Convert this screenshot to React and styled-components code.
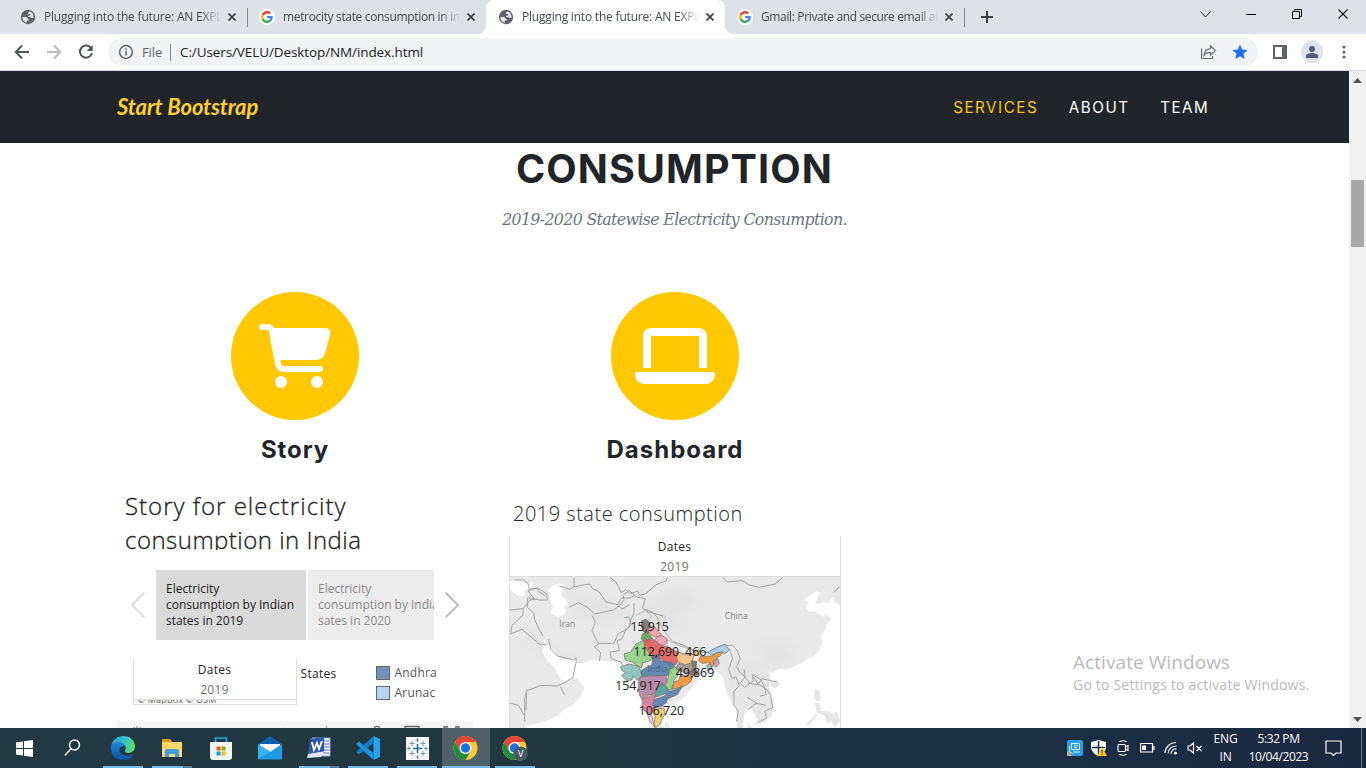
import React from "react";
import styled, { createGlobalStyle, css } from "styled-components";

const ui = `"Open Sans", "Noto Sans", "Liberation Sans", sans-serif`;
const display = `Inter, "Open Sans", sans-serif`;

const Global = createGlobalStyle`
  *{box-sizing:border-box}
  html,body{margin:0;padding:0}
  body{width:1366px;height:768px;overflow:hidden;background:#fff;font-family:${ui}}
  svg{display:block;flex:none}
`;

const Screen = styled.div`
  display:flex;flex-direction:column;width:1366px;height:768px;overflow:hidden;
`;

/* ---------- browser chrome ---------- */
const TabStrip = styled.div`
  height:34px;flex:none;display:flex;align-items:stretch;background:#dee1e6;padding-left:8px;
`;
const Tab = styled.div`
  width:239px;display:flex;align-items:center;padding:0 9px 0 12px;position:relative;
  ${p => p.$divider && css`&::after{content:"";position:absolute;right:-1px;top:8px;width:1px;height:19px;background:#84878b}`}
  ${p => p.$active && css`
    background:#fff;border-radius:8px 8px 0 0;
    &::before,&::after{content:"";position:absolute;bottom:0;width:8px;height:8px}
    &::before{left:-8px;background:radial-gradient(circle at 0 0,#dee1e6 7.5px,#fff 8px)}
    &::after{right:-8px;background:radial-gradient(circle at 100% 0,#dee1e6 7.5px,#fff 8px)}`}
`;
const TabTitle = styled.div`
  margin-left:8px;width:177px;overflow:hidden;white-space:nowrap;font-size:12px;line-height:18px;
  letter-spacing:${p => p.$track}px;color:#45494d;
  mask-image:linear-gradient(90deg,#000 157px,transparent 177px);
`;
const TabClose = styled.div`margin-left:auto;margin-right:2px;padding-left:2px`;
const NewTab = styled.div`width:46px;display:grid;place-items:center`;
const WindowButtons = styled.div`
  margin-left:auto;display:flex;height:28px;
`;
const WindowButton = styled.div`width:46px;display:grid;place-items:center`;

const Toolbar = styled.div`
  height:37px;flex:none;display:flex;align-items:center;background:#fff;border-bottom:1px solid #dadce0;
  padding:0 10px 0 14px;
`;
const NavIcons = styled.div`display:flex;gap:16px;width:94px`;
const Address = styled.div`
  width:1150px;height:28px;border-radius:14px;background:#f1f3f4;display:flex;align-items:center;
  padding:0 10px 0 10px;font-size:13.5px;color:#202124;
`;
const Scheme = styled.span`
  margin-left:8px;color:#5f6368;padding-right:7px;border-right:1px solid #80868b;line-height:17px;width:29px;
  font-size:13px;letter-spacing:-.1px;
`;
const Url = styled.span`margin-left:9px;letter-spacing:-.1px;white-space:nowrap`;
const AddressActions = styled.div`margin-left:auto;display:flex;gap:15px;align-items:center`;
const ToolbarActions = styled.div`
  display:flex;align-items:center;flex:1;padding-left:15px;
`;
const Avatar = styled.div`
  width:22px;height:22px;border-radius:50%;background:#dee1e6;display:grid;place-items:center;margin:0 19px 0 14px;
`;

/* ---------- web page ---------- */
const Viewport = styled.div`flex:1;min-height:0;display:flex;overflow:hidden`;
const Page = styled.div`width:1349px;overflow:hidden;background:#fff`;
const SiteNav = styled.nav`
  height:72px;background:#212529;display:flex;align-items:center;justify-content:space-between;
  padding:0 140px 0 117px;
`;
const Brand = styled.div`
  font:italic 700 22px/30px Lato,sans-serif;color:#ffcf33;letter-spacing:-.1px;
`;
const Links = styled.div`display:flex;gap:30.500px;padding-top:1px`;
const NavLink = styled.a`
  font:400 15.2px/24px ${display};letter-spacing:${p => p.$track}px;color:${p => (p.$active ? "#ffc800" : "#fff")};
`;
const SectionTitle = styled.h2`
  margin:0;height:52px;text-align:center;font:750 39.500px/52px ${display};letter-spacing:1.1px;color:#212529;
`;
const SectionSub = styled.h3`
  margin:13px 0 0;height:23px;text-align:center;font:italic 400 15.800px/23px "DejaVu Serif","Liberation Serif",serif;
  letter-spacing:-.65px;color:#6c757d;
`;
const Columns = styled.div`
  display:grid;grid-template-columns:repeat(3,380px);margin:61px auto 0;width:1140px;
`;
const Column = styled.section`display:flex;flex-direction:column;align-items:center`;
const Disc = styled.div`
  width:128px;height:128px;border-radius:50%;background:#ffc800;display:grid;place-items:center;
`;
const ColumnTitle = styled.h4`
  margin:15px 0 0;height:30px;font:700 24px/29px ${display};letter-spacing:${p => p.$track}px;text-indent:1px;color:#212529;
`;

/* ---------- story visualisation ---------- */
const Viz = styled.div`width:356px;display:flex;flex-direction:column`;
const StoryTitle = styled.div`
  margin:24px 0 0 8.500px;height:61px;overflow:hidden;font-weight:300;font-size:24px;line-height:34px;
  color:#222;white-space:nowrap;-webkit-text-stroke:.3px #222;
`;
const StoryTitleLine = styled.div`letter-spacing:${p => p.$track}px`;
const StoryNav = styled.div`margin-top:20px;height:70px;display:flex;align-items:center;padding:0 12px 0 14px`;
const Tiles = styled.div`width:278px;margin:0 11px 0 11px;display:flex;gap:2px;overflow:hidden`;
const Tile = styled.div`
  width:150px;height:70px;flex:none;padding:11px 0 0 10.500px;font-size:12px;line-height:16px;white-space:nowrap;
  letter-spacing:-.02px;background:${p => (p.$active ? "#dadada" : "#ececec")};color:${p => (p.$active ? "#1a1a1a" : "#8a8a8a")};
`;
const StoryBody = styled.div`display:flex;margin:19px 0 0 16px;height:46px`;
const DatePane = styled.div`
  width:${p => p.$width}px;border:solid #dedede;border-width:0 1px ${p => (p.$closed ? 1 : 0)}px 1px;
`;
const DateHead = styled.div`
  height:${p => p.$height}px;border-bottom:1px solid #dedede;padding-top:${p => p.$top}px;text-align:center;font-size:12px;line-height:20px;color:#222;
  letter-spacing:.25px;
`;
const DateValue = styled.div`color:#707070;letter-spacing:.3px`;
const Credit = styled.div`
  height:4px;width:84px;margin-left:4px;overflow:hidden;display:flex;align-items:flex-end;
  font-size:9px;line-height:8px;color:#555;white-space:nowrap;letter-spacing:.2px;
`;
const LegendTitle = styled.div`margin-left:4px;width:75px;font-size:12px;line-height:29px;color:#222;letter-spacing:.3px`;
const Legend = styled.div`width:60px;padding-top:4px;overflow:hidden`;
const LegendItem = styled.div`
  display:flex;align-items:center;gap:5px;height:20px;font-size:12px;line-height:18px;color:#555;white-space:nowrap;letter-spacing:.2px;
`;
const Swatch = styled.i`width:14px;height:14px;flex:none;border:1px solid #666;background:${p => p.$fill}`;
const VizBar = styled.div`margin-top:16px;height:30px;background:#f5f5f5;overflow:hidden`;

const DashTitle = styled.div`
  margin:34px 0 0 16.500px;height:30px;font-weight:300;font-size:20px;line-height:30px;letter-spacing:.5px;color:#222;white-space:nowrap;
`;
const DashPane = styled.div`margin:7px 0 0 12px`;

const Scrollbar = styled.div`
  width:17px;background:#f1f1f1;display:flex;flex-direction:column;align-items:center;padding:7px 0 6px;
`;
const Thumb = styled.div`width:13px;height:67px;background:#a8a8a8;margin:97px 0 auto`;

const Watermark = styled.div`
  position:absolute;left:1073px;top:650px;color:#b9b9b9;white-space:nowrap;
  div{font-size:19px;line-height:25px;letter-spacing:.07px}
  p{margin:0;font-size:14px;line-height:20px;letter-spacing:.2px}
`;

/* ---------- taskbar ---------- */
const Taskbar = styled.div`
  height:40px;flex:none;display:flex;background:linear-gradient(90deg,#213943 0,#21373f 42%,#1b3044 70%,#1a2740 100%);color:#fff;
`;
const Launcher = styled.div`width:48px;display:grid;place-items:center;margin-right:${p => p.$after || 0}px`;
const TaskApp = styled.div`
  width:48px;margin-right:1px;height:40px;display:grid;place-items:center;position:relative;
  background:${p => (p.$active ? "#4e6068" : "transparent")};
  ${p => p.$running && css`&::after{content:"";position:absolute;bottom:0;height:2px;
    left:${p.$active ? 0 : 4}px;right:${p.$active ? 0 : 4}px;
    background:${p.$split ? "linear-gradient(90deg,#76b9ed 31px,#507f9f 31px)" : "#76b9ed"}}`}
`;
const Tray = styled.div`margin-left:auto;display:flex;align-items:center`;
const TrayIcon = styled.div`width:24px;display:grid;place-items:center`;
const TrayText = styled.div`
  width:${p => p.$width}px;text-align:center;font-size:12px;line-height:18px;letter-spacing:${p => p.$track}px;white-space:nowrap;
`;
const ActionCenter = styled.div`margin-left:12px`;
const ShowDesktop = styled.div`width:5px;height:40px;border-left:1px solid #6c7686;margin-left:19px`;

/* ---------- icons ---------- */
const GlobeIcon = () => (
  <svg width="16" height="16" viewBox="0 0 16 16"><circle cx="8" cy="8" r="7.2" fill="#5f6368" />
    <path d="M2.3 8.1h3.4c1.7 0 1.5 2 3 2.1v1.2H6.8v2.3C4 13.300 2.300 11 2.300 8.100zM8 3.200c-.2 1.500.2 2 1.700 1.900 1 0 .7 1.100 0 1.400-.8.3-1.700.2-1.600 1.100.1.900 2.600.1 3.300 1.500h2.100C13.800 5.400 12 2.800 9.200 2.400 9 3 8.400 3.200 8 3.200z" fill="#e8eaed" /></svg>
);
const GoogleIcon = () => (
  <svg width="16" height="16" viewBox="0 0 16 16"><circle cx="8" cy="8" r="8" fill="#fff" />
    <g transform="translate(2 2) scale(.25)">
      <path fill="#EA4335" d="M24 9.500c3.540 0 6.710 1.220 9.210 3.600l6.850-6.850C35.900 2.380 30.470 0 24 0 14.620 0 6.510 5.380 2.560 13.220l7.980 6.190C12.430 13.720 17.740 9.500 24 9.500z" />
      <path fill="#4285F4" d="M46.980 24.550c0-1.570-.15-3.090-.38-4.550H24v9.020h12.940c-.58 2.960-2.260 5.480-4.780 7.180l7.730 6c4.510-4.180 7.090-10.360 7.090-17.650z" />
      <path fill="#FBBC05" d="M10.530 28.590c-.48-1.450-.76-2.990-.76-4.590s.27-3.140.76-4.590l-7.980-6.190C.92 16.460 0 20.120 0 24c0 3.880.92 7.540 2.560 10.780l7.970-6.190z" />
      <path fill="#34A853" d="M24 48c6.480 0 11.930-2.130 15.890-5.810l-7.730-6c-2.150 1.450-4.920 2.300-8.160 2.300-6.260 0-11.570-4.220-13.470-9.910l-7.980 6.190C6.510 42.620 14.620 48 24 48z" />
    </g></svg>
);
const Cross = ({ size = 8, color = "#3c4043", w = 1.7 }) => (
  <svg width={size} height={size} viewBox={`0 0 ${size} ${size}`} stroke={color} strokeWidth={w}>
    <path d={`M.5 .5L${size - 0.5} ${size - 0.5}M${size - 0.5} .5L.5 ${size - 0.5}`} /></svg>
);
const CartIcon = () => (
  <svg width="72" height="64" viewBox="0 0 576 512" fill="#fff"><path d="M0 24C0 10.700 10.700 0 24 0H69.500c22 0 41.500 12.800 50.600 32h411c26.300 0 45.500 25 38.600 50.400l-41 152.300c-8.500 31.400-37 53.300-69.500 53.300H170.700l5.400 28.500c2.200 11.300 12.100 19.500 23.600 19.500H488c13.300 0 24 10.700 24 24s-10.700 24-24 24H199.700c-34.600 0-64.300-24.600-70.700-58.500L77.400 54.500c-.7-3.800-4-6.500-7.900-6.500H24C10.700 48 0 37.300 0 24zM128 464a48 48 0 1 1 96 0 48 48 0 1 1-96 0zm336-48a48 48 0 1 1 0 96 48 48 0 1 1 0-96z" /></svg>
);
const LaptopIcon = () => (
  <svg width="80" height="64" viewBox="0 0 640 512" fill="#fff"><path d="M128 32C92.700 32 64 60.700 64 96V352h64V96H512V352h64V96c0-35.300-28.700-64-64-64H128zM19.200 384C8.600 384 0 392.600 0 403.200C0 445.600 34.400 480 76.800 480H563.200c42.400 0 76.800-34.400 76.800-76.800c0-10.600-8.600-19.200-19.200-19.200H19.200z" /></svg>
);
const Chevron = ({ right, color }) => (
  <svg width="14" height="26" viewBox="0 0 14 26" fill="none" stroke={color} strokeWidth="2">
    <path d={right ? "M.7.7L13 13 .7 25.300" : "M13.300.7L1 13l12.300 12.300"} /></svg>
);
const ChromeLogo = ({ badge }) => (
  <svg width="26" height="26" viewBox="0 0 26 26">
    <circle cx="12.500" cy="13" r="12" fill="#fcc934" />
    <path d="M2.100 7A12 12 0 0 1 22.900 7H12.500L7.300 16z" fill="#ea4335" />
    <path d="M2.100 7A12 12 0 0 0 12.500 25l5.200-9-5.200 3-5.200-3z" fill="#1e8e3e" />
    <circle cx="12.500" cy="13" r="6.100" fill="#fff" /><circle cx="12.500" cy="13" r="4.700" fill="#1a73e8" />
    {badge && <g><circle cx="18.500" cy="18.800" r="7.300" fill="#455a64" /><text x="18.500" y="22" textAnchor="middle" fontSize="9" fill="#fff" fontFamily="Roboto">V</text></g>}
  </svg>
);
const EdgeLogo = () => (
  <svg width="26" height="26" viewBox="0 0 26 26">
    <defs><linearGradient id="eg" x1="0" y1=".3" x2="1" y2=".5"><stop offset="0" stopColor="#2499dc" /><stop offset=".55" stopColor="#35c1d0" /><stop offset="1" stopColor="#66e05c" /></linearGradient>
      <linearGradient id="eb" x1="0" y1="0" x2="0" y2="1"><stop offset="0" stopColor="#1b84d6" /><stop offset="1" stopColor="#0b54a0" /></linearGradient></defs>
    <path d="M1 12C2 4.500 7.500 1 13.300 1 20.500 1 25 6 25 11.300c0 4.200-3 6.700-6.500 6.700-3 0-4-1.300-3.500-2.500.7-1.300.9-2 .5-3.300C14.700 9.500 12 7.500 8.500 7.500 5 7.500 2 9 1 12z" fill="url(#eg)" />
    <path d="M1 12C2 9 5 7.500 8.500 7.500c3.200 0 5.700 1.700 6.700 3.700-1.500-.6-4.600-.4-5.500 2.800-1.200 5 4.800 9 12.800 5.500.6-.2 1 .3.600.9C21 23.500 17.500 25.300 13.500 25.300 6.500 25.300 0 20 1 12z" fill="url(#eb)" />
  </svg>
);

const line = { fill: "none", stroke: "#a3a3a3", strokeWidth: 3, strokeLinejoin: "round" };
const states = [
  ["#726d69", "M425 392l13-4 12 10 2 20-8 14-14-8-6-14z"],
  ["#ff9d9a", "M444 416l18-8 14 18 10 8-12 6-18-2-10-14z"],
  ["#59a14f", "M427 432l14-6 14 16-8 14-18-4-6-6z"],
  ["#ff9da7", "M468 444l18-8 16 12-6 16-14 0-16-12z"],
  ["#8cd17d", "M408 462l20-10 14 4 16 26 6 18-18 14-18 4-4 16-28-18-20-6-4-18 20-6z"],
  ["#e15759", "M432 450l24-6 10 10 16 12 20 4 34 18 2 14-10 22-22 2-24-18-16-4-8 6-8-18-16-20z"],
  ["#ffbe7d", "M536 486l18 8 28 0-6 24-20 6-22-8-6-12z"],
  ["#86bcb6", "M362 530l26-8 26 6 12 20-4 16-12 6-12-12-2 12-16 2-16-16 14-8-12-6z"],
  ["#4e79a7", "M426 540l30-16 2-24 18-8 4 20 34 4 12 16-20 24-30 2-26-2-24 4-4-14z"],
  ["#b07aa1", "M414 572l10-12 74-4 6 22-8 8-18 2-12 22-18 4-22 16-8-16z"],
  ["#8cd17d", "M508 540l14-10 18 8-8 20-10 12-8 28-14 4-4-20 8-16z"],
  ["#9c8f88", "M536 520l20 6 20-8 4 22-18 10-20-6-14-8z"],
  ["#6c6763", "M574 512l16 2-2 24 8 14-10 6-22-8 16-14z"],
  ["#f28e2b", "M540 558l28-4 10 2-6 20-22 14-34 8 8-24 12-2z"],
  ["#499894", "M468 596l18-16 20 18-6 12-18 6-16 6z"],
  ["#4e79a7", "M464 628l30-10 10-14 20-4 24-12-16 26-28 12-6 12-14 12-22 4-6-12z"],
  ["#d37295", "M428 628l20-8 14-12 4 12-8 22 4 14-8 16-22-10-6-18z"],
  ["#fabfd2", "M438 664l18 14 8 34-14-18z"],
  ["#f1ce63", "M464 658l28-4 2 20-10 16-4 12-14 12-4-16 4-18-6-12z"],
  ["#edc948", "M584 482l14-2 4 14-18 2z"],
  ["#f28e2b", "M600 500l36-2 20-14 16 0-14 16-8 2-2 18-14 12-6-14-22 2-10-8z"],
  ["#a0cbe8", "M624 486l26-14 26-10 12 18-14 12-6-6-18 2-16 8z"],
  ["#c99bbd", "M640 512l14-6 4 16-10 10-8-6z"],
  ["#86bcb6", "M620 526l12-4 4 14-12 6z"],
];
const AsiaMap = () => (
  <svg width="330" height="152" viewBox="30 261 990 456" preserveAspectRatio="none">
    <defs><filter id="soft" x="-30%" y="-30%" width="160%" height="160%"><feGaussianBlur stdDeviation="14" /></filter></defs>
    <rect x="30" y="261" width="990" height="456" fill="#e9e9e9" />
    <g fill="#e3e3e3" filter="url(#soft)"><path d="M410 370l60-60 80-30 40 60-60 40 10 50-70-10z" /><path d="M230 310l100 20 80 40-90 30-100-30zM780 440l90 20 20 60-100 20z" /><path d="M690 500l80 20 20 60-60 30-50-50zM60 400l80 60 100 60-20 20-120-60z" /></g>
    <g fill="#fff">
      <path d="M30 275l35-6 12 12 22-4-6 18-22 8 4 14-20 0-25-16z" />
      <path d="M145 300l14-14 20-6 20 8-12 14-4 14 14 10 6 16-10 6 4 12-4 14-20 6-20-10 6-20-8-16-4-18z" />
      <path d="M134 446l8 18 18 14 10 16 20 16 18 0 18-6 4 16 18-2 30-8 60 4 36 14 14-4 10 12-22 6 16 24 24-2 10 44 16 40 20 40 4 24 14 24 10-60 26-30 30-20 40-44 16-30 26-8 20-2 20 18 8 32 8 24 16 34 10-2 8-38 12 20 14 48-4 60H80l-2-30 60-14 40-20 10-12 28-16 24-22 14-30-22-28-20 2-8 12-22-12-12-24-14-18-14-14-16-26z" />
      <path d="M700 660l8 57h34l-4-20-14-28zM746 622l16 22-4 18 14 0 22-20 4 16-12 20-24 22-10 17h268V314l-22 6-12 20-18-6 0 18 12 24 14 12-14 14-4 18-12 16 2 22-6 20-14 18-22 10-20 14-24 10-20 8-20-2-18 10-20 2-12-8-20 10-18 20 24 26 30 40-2 34-30 30-24 10-8-22-6-26-16-8z" />
      <path d="M912 330l36-26 14 4-10 14-6 22 24-6 12 20-10 22-18-8-10-8-16 2-10-14 10-14z" />
      <path d="M840 548l20-8 16 10 6 60-54 60-10-40-16-40z" />
    </g>
    <g fill="#e6e6e6">
      <path d="M736 560l30-22 40 4 6 22-6 28 14 44-4 40-26 22-18-12-16-26-14-8-10 22-4 43h-16l-2-60-22-40 4-40 30-30z" />
      <path d="M814 574l18-4 6 14-14 12-12-10zM944 598l14 2 4 24-8 14-12-16zM944 640l12-2 8 24 14 2-6 12-20-6zM972 674l14-12 8 10 18-8 8 30-14 16-14-16-10 8zM918 704l30-34 4 6-28 32zM1000 300l20-14v60l-16-8-6-18zM495 700l6-6 6 14v9h-12z" />
    </g>
    <g {...line}>
      <path d="M30 360l40-4 20-26 14-2-20-26 24-8 8 10 20 14M44 270l26 0 14 10 4 18 24-4 28 18 2 18-24 0-26-6-10 0 0 28 20 18 2 20 24 48M70 358l-2 18-32 30-4 26 34-14 52 44 22 2M146 448l6 30 20 20 50 12 6-8 0 16-10 46-44 24-50-2-44 16-6 22 0 70M78 660l2-54M182 590l12 26M178 288l18 4 12 6 14-8 0-28M222 290l46-8 10 14 20 10 20 30 26 6 10 2 10-20 26 0 14-8M206 352l30-14 26 14 22 20 56-12 18-12 8 10 22-14M276 376l10 22-10 24 20 40-14 8 20 18-4 26M294 460l48 0 12-28 32-18 6-24 10-20 0-30" />
      <path d="M330 262l18 14 16 32 14-10 14 14 20-10 8 14 16-4 32-28 32-12 2-16M358 348l14-20-4-12 20-14 24 20 24 4-8 28 12 10 50 14M372 384l14-4 8 24-16 14-12 28-14 6 6 30-28 4 4 20 28 10 6 12M436 358l20 8 14 14 18 36 14 20 16 18 28 10 38 18 24 6 26-2 32-20 32 0 14 16 8 24-10 24 10 18 14 12 16 20 24 4 12-18 44 10" />
      <path d="M668 262l14 14 44-4 20 12 30 8 50-10 22-20M688 476l10 28-12 34 10 28 12-6 10 26-16 18 0 40 12 20-4 30M732 538l4 22-16 20 14 12 26-20-4-18 26 14 12 24 4 22-18 4M760 560l14 22 26 16 12 18 6 36-24 12 6 20-26 14M742 622l32 20M742 660l26-20 30 6M30 640l26 6 16 30M1018 290l-18 18" />
      <path d="M490 384l-12-10 20 6M408 376l28-14 18 16-14 20-24 8" strokeWidth="1.800" />
    </g>
    <path d="M502 450l34 16 48 18 0 12-48-8-34-18z" fill="#efefef" stroke="#999" strokeWidth="2" />
    <g stroke="#77756f" strokeWidth="2.200" fillOpacity=".86" strokeLinejoin="round">{states.map(([f, d]) => <path key={d} d={d} fill={f} />)}</g>
    <g fontFamily="Open Sans" textAnchor="middle">
      <g fontSize="26" fill="#858585"><text x="202" y="410">Iran</text><text x="709" y="386">China</text><text x="472" y="545" fill="#4b6787">India</text></g>
      <g fontSize="37" fill="#222"><text x="449" y="422">15,915</text><text x="469" y="498">112,690</text><text x="587" y="499">466</text><text x="585" y="561">49,869</text><text x="414" y="599">154,917</text><text x="484" y="675">106,720</text></g>
    </g>
  </svg>
);

const tabs = [
  { icon: "globe", title: "Plugging into the future: AN EXPLORATION", track: -0.2, divider: true },
  { icon: "google", title: "metrocity state consumption in india", track: -0.34 },
  { icon: "globe", title: "Plugging into the future: AN EXPLORATION", track: -0.2, active: true },
  { icon: "google", title: "Gmail: Private and secure email at", track: -0.36, divider: true },
];

const Browser = () => (
  <>
    <TabStrip>
      {tabs.map((t, i) => (
        <Tab key={i} $active={t.active} $divider={t.divider}>
          {t.icon === "globe" ? <GlobeIcon /> : <GoogleIcon />}
          <TabTitle $track={t.track}>{t.title}</TabTitle>
          <TabClose><Cross /></TabClose>
        </Tab>
      ))}
      <NewTab><svg width="12" height="12" stroke="#3c4043" strokeWidth="2"><path d="M6 0v12M0 6h12" /></svg></NewTab>
      <WindowButtons>
        <WindowButton><svg width="11" height="7" fill="none" stroke="#222"><path d="M.5.5l5 5.500 5-5.500" /></svg></WindowButton>
        <WindowButton><svg width="10" height="1"><rect width="10" height="1" /></svg></WindowButton>
        <WindowButton><svg width="10" height="10" fill="none" stroke="#000"><path d="M.5 2.500h7v7h-7zM2.500 2.500v-2h7v7h-2" /></svg></WindowButton>
        <WindowButton><Cross size={10} color="#111" w={1.1} /></WindowButton>
      </WindowButtons>
    </TabStrip>
    <Toolbar>
      <NavIcons>
        <svg width="16" height="16" fill="none" stroke="#505357" strokeWidth="2"><path d="M15 8H2M8 1.500L1.800 8 8 14.500" /></svg>
        <svg width="16" height="16" fill="none" stroke="#babcbe" strokeWidth="2"><path d="M1 8h13M8 1.500L14.200 8 8 14.500" /></svg>
        <svg width="16" height="16" fill="none" stroke="#505357" strokeWidth="2"><path d="M13.200 4.300A6.100 6.100 0 1 0 14 9" /><path d="M14.700 1v6H8.700z" fill="#505357" stroke="none" /></svg>
      </NavIcons>
      <Address>
        <svg width="16" height="16" fill="none" stroke="#5f6368" strokeWidth="1.500"><circle cx="8" cy="8" r="6.400" /><path d="M8 7v4.500M8 4.200v1.600" /></svg>
        <Scheme>File</Scheme><Url>C:/Users/VELU/Desktop/NM/index.html</Url>
        <AddressActions>
          <svg width="17" height="16" fill="none" stroke="#6b6f73" strokeWidth="1.200"><path d="M1.600 4.500v10h11V12" /><path d="M10.500 2l5 4.500-5 4.500V8.400C7.500 8.400 5.500 9.300 4 11.500c.3-3.800 2.800-6.500 6.500-6.900z" /></svg>
          <svg width="16" height="16" viewBox="0 0 24 24" fill="#1a73e8"><path d="M12 .8l3.200 7.600 8.300.7-6.300 5.400 1.900 8.100L12 18.300l-7.100 4.300 1.900-8.100L.5 9.100l8.300-.7z" /></svg>
        </AddressActions>
      </Address>
      <ToolbarActions>
        <svg width="14" height="14"><path d="M0 0h14v14H0zM2 2v10h7V2z" fill="#5f6368" fillRule="evenodd" /></svg>
        <Avatar><svg width="12" height="12" fill="#525d73"><circle cx="6" cy="3" r="3" /><path d="M0 12V9.800C0 7.800 4 7 6 7s6 .8 6 2.800V12z" /></svg></Avatar>
        <svg width="4" height="14" fill="#5f6368"><circle cx="2" cy="2" r="1.600" /><circle cx="2" cy="7" r="1.600" /><circle cx="2" cy="12" r="1.600" /></svg>
      </ToolbarActions>
    </Toolbar>
  </>
);

const Story = () => (
  <Viz>
    <StoryTitle>
      <StoryTitleLine $track={1}>Story for electricity</StoryTitleLine>
      <StoryTitleLine $track={0.48}>consumption in India</StoryTitleLine>
    </StoryTitle>
    <StoryNav>
      <Chevron color="#dedede" />
      <Tiles>
        <Tile $active>Electricity<br />consumption by Indian<br />states in 2019</Tile>
        <Tile>Electricity<br />consumption by Indian<br />sates in 2020</Tile>
      </Tiles>
      <Chevron right color="#bdbdbd" />
    </StoryNav>
    <StoryBody>
      <DatePane $width={164} $closed><DateHead $height={41} $top={1}>Dates<DateValue>2019</DateValue></DateHead><Credit>© Mapbox © OSM</Credit></DatePane>
      <LegendTitle>States</LegendTitle>
      <Legend>
        <LegendItem><Swatch $fill="#7193b9" />Andhra</LegendItem>
        <LegendItem><Swatch $fill="#b3d5ed" />Arunachal</LegendItem>
      </Legend>
    </StoryBody>
    <VizBar>
      <svg width="356" height="30" fill="none" stroke="#666" strokeWidth="1.300"><path d="M17 9V6M20 10V5M23 9V6M166 8l1-1M209.500 5v12" stroke="#999" /><circle cx="260" cy="8" r="2.700" /><path d="M288 17V5.500h14V17M327 9V6h4M338 6h4v3M325 6" /></svg>
    </VizBar>
  </Viz>
);

const Dashboard = () => (
  <Viz>
    <DashTitle>2019 state consumption</DashTitle>
    <DashPane><DatePane $width={332}><DateHead $height={41} $top={1}>Dates<DateValue>2019</DateValue></DateHead><AsiaMap /></DatePane></DashPane>
  </Viz>
);

const WindowsTaskbar = () => (
  <Taskbar>
    <Launcher><svg width="17" height="17" fill="#fff"><path d="M0 2.500l7-1V8H0zM8 1.300L17 0v8H8zM0 9h7v6.500l-7-1zM8 9h9v8l-9-1.300z" /></svg></Launcher>
    <Launcher $after={3}><svg width="17" height="18" fill="none" stroke="#fff" strokeWidth="1.400"><circle cx="10.500" cy="6" r="5" /><path d="M7 9.700L.8 16.500" /></svg></Launcher>
    <TaskApp $running><EdgeLogo /></TaskApp>
    <TaskApp $running $split><svg width="22" height="20"><path d="M1 1h8l2 3h10v15H1z" fill="#ffd667" /><path d="M1 1h8l1.500 3H1z" fill="#d99b16" /><path d="M4 19v-6q0-2 2-2h10q2 0 2 2v6h-4v-3H8v3z" fill="#3b9de0" /></svg></TaskApp>
    <TaskApp><svg width="24" height="25"><path d="M6.500 7V2h11v5" fill="none" stroke="#21a8e6" strokeWidth="1.700" /><path d="M1 6h22v15q0 3-3 3H4q-3 0-3-3z" fill="#f3f3f3" /><path d="M7.500 10.500h4v4h-4z" fill="#f25022" /><path d="M12.500 10.500h4v4h-4z" fill="#7fba00" /><path d="M7.500 15.500h4v4h-4z" fill="#00a4ef" /><path d="M12.500 15.500h4v4h-4z" fill="#ffb900" /></svg></TaskApp>
    <TaskApp><svg width="24" height="24"><path d="M0 8L12 0l12 8v4H0z" fill="#0f5fae" /><path d="M2 8h20v6l-9 4L2 14z" fill="#f6f8fa" /><path d="M0 8l13 8L0 23.500z" fill="#35b3ed" /><path d="M24 8v15.500H0l13-8z" fill="#1d9be2" /></svg></TaskApp>
    <TaskApp $running $split><svg width="24" height="24"><path d="M5 2h18v18H5z" fill="#f7f9fd" stroke="#8ba4d2" /><path d="M17 5h5M17 8h5M17 11h5M17 14h5M8 17h14" stroke="#496db3" /><path d="M3 3l14-2v14.500L1 18z" fill="#3158a8" /><path d="M5 6l2 8 3-7 2 6 3-8" fill="none" stroke="#fff" strokeWidth="1.800" /><path d="M1 18l16-2.500L14 21 0 22z" fill="#dce5f5" /></svg></TaskApp>
    <TaskApp $running><svg width="24" height="24"><path d="M17.500 0L24 3v18l-6.500 3z" fill="#27a4ee" /><path d="M17.500 0v7L3 18.500 0 16z" fill="#1480c8" /><path d="M17.500 24v-7L3 5.500 0 8z" fill="#1b92dc" /></svg></TaskApp>
    <TaskApp $running><svg width="23" height="23"><path d="M0 0h23v23H0z" fill="#fafafa" /><path d="M11.500 7v9M7 11.500h9" stroke="#24699b" strokeWidth="1.500" /><path d="M6 4v5M3.500 6.500h5M17 4v5M14.500 6.500h5M6 14v5M3.500 16.500h5M17 14v5M14.500 16.500h5M11.500 1v4M9.500 3h4M11.500 18v4M9.500 20h4M3 9.500v4M1 11.500h4M20 9.500v4M18 11.500h4" stroke="#5b91b9" strokeWidth=".9" /></svg></TaskApp>
    <TaskApp $running $active><ChromeLogo /></TaskApp>
    <TaskApp $running><ChromeLogo badge /></TaskApp>
    <Tray>
      <TrayIcon><svg width="16" height="16"><rect width="16" height="16" rx="2" fill="#2d9fdc" /><path d="M4.500 3.500h8v6h-8zM6 12h7M2.500 6v6l3 1.500M7 5.500h3.500M7 7.500h3" fill="none" stroke="#c9e9fa" /><path d="M0 11l5 5H1q-1 0-1-1z" fill="#e7b06a" /></svg></TrayIcon>
      <TrayIcon><svg width="16" height="17"><path d="M7.500 0L15 2v6q-1 5-7.500 8Q1 13 0 8V2z" fill="#fff" /><path d="M7.500 1v14M1 7.500h13" stroke="#1b2a40" strokeWidth="1.500" /><path d="M11 7l5 9H6z" fill="#ffc928" /><path d="M11 10v3M11 14v1" stroke="#222" /></svg></TrayIcon>
      <TrayIcon><svg width="12" height="16" fill="none" stroke="#fff" strokeWidth="1.100"><rect x="1" y="4.500" width="7.500" height="7" rx="1" /><path d="M8.500 7l2.500-1.500v5L8.500 9M2.500 1.800Q6-.3 9.500 1.800M2.500 14.200Q6 16.300 9.500 14.200" /></svg></TrayIcon>
      <TrayIcon><svg width="15" height="10" fill="none" stroke="#fff"><path d="M.5.5h12v8.500H.5zM14 3v4" strokeWidth="1.200" /><path d="M2 2.500h4v4.500H2z" fill="#fff" stroke="none" /></svg></TrayIcon>
      <TrayIcon><svg width="14" height="14" fill="none" stroke="#e7e9ec" strokeWidth="1.200"><path d="M1 12A11 11 0 0 1 12 1.500M4 12.500A8 8 0 0 1 12.500 5M7 13A5 5 0 0 1 12.500 8" /><circle cx="11.500" cy="12" r="1.500" fill="#fff" stroke="none" /></svg></TrayIcon>
      <TrayIcon><svg width="16" height="12" fill="none" stroke="#fff" strokeWidth="1.100"><path d="M1 4h2l3.500-3v10L3 8H1zM9.500 4l5 5M14.500 4l-5 5" /></svg></TrayIcon>
      <TrayText $width={37} $track={-0.1}>ENG<br />IN</TrayText>
      <TrayText $width={69} $track={-0.4}>5:32 PM<br />10/04/2023</TrayText>
      <ActionCenter><svg width="17" height="16" fill="none" stroke="#fff" strokeWidth="1.200"><path d="M1 1h15v12h-5l-2.500 2.500L6 13H1z" /></svg></ActionCenter>
      <ShowDesktop />
    </Tray>
  </Taskbar>
);

export default function App() {
  return (
    <Screen>
      <Global />
      <Browser />
      <Viewport>
        <Page>
          <SiteNav>
            <Brand>Start Bootstrap</Brand>
            <Links><NavLink $active $track={1.5}>SERVICES</NavLink><NavLink $track={1.6}>ABOUT</NavLink><NavLink $track={1.4}>TEAM</NavLink></Links>
          </SiteNav>
          <SectionTitle>CONSUMPTION</SectionTitle>
          <SectionSub>2019-2020 Statewise Electricity Consumption.</SectionSub>
          <Columns>
            <Column><Disc><CartIcon /></Disc><ColumnTitle $track={0.9}>Story</ColumnTitle><Story /></Column>
            <Column><Disc><LaptopIcon /></Disc><ColumnTitle $track={1}>Dashboard</ColumnTitle><Dashboard /></Column>
          </Columns>
        </Page>
        <Scrollbar>
          <svg width="9" height="5" fill="#505050"><path d="M0 5l4.500-5L9 5z" /></svg>
          <Thumb />
          <svg width="9" height="5" fill="#505050"><path d="M0 0h9L4.500 5z" /></svg>
        </Scrollbar>
      </Viewport>
      <WindowsTaskbar />
      <Watermark><div>Activate Windows</div><p>Go to Settings to activate Windows.</p></Watermark>
    </Screen>
  );
}
